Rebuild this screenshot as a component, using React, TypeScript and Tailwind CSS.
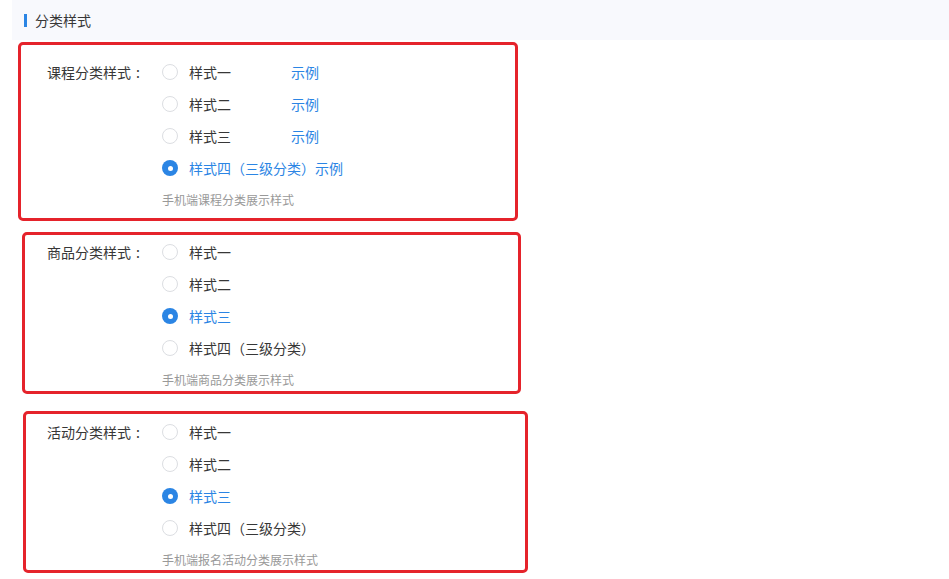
import React from "react";

type Group = {
  label: string;
  options: string[];
  checked: number;
  example?: boolean;
  hint: string;
  box: string;
};

const groups: Group[] = [
  {
    label: "课程分类样式",
    options: ["样式一", "样式二", "样式三", "样式四（三级分类）"],
    checked: 3,
    example: true,
    hint: "手机端课程分类展示样式",
    // red annotation frame around each block
    box: "mt-[2px] ml-[18px] w-[500px] h-[179px] pt-[11px] pl-[26px]",
  },
  {
    label: "商品分类样式",
    options: ["样式一", "样式二", "样式三", "样式四（三级分类）"],
    checked: 2,
    hint: "手机端商品分类展示样式",
    box: "mt-[11px] ml-[22px] w-[499px] h-[162px] pt-[1px] pl-[22px]",
  },
  {
    label: "活动分类样式",
    options: ["样式一", "样式二", "样式三", "样式四（三级分类）"],
    checked: 2,
    hint: "手机端报名活动分类展示样式",
    box: "mt-[17px] ml-[23px] w-[505px] h-[162px] pt-[2px] pl-[21px]",
  },
];

function Radio({ on }: { on: boolean }) {
  return on ? (
    <span className="flex h-[16px] w-[16px] items-center justify-center rounded-full bg-[#2b85e4]">
      <span className="h-[5px] w-[5px] rounded-full bg-white" />
    </span>
  ) : (
    <span className="h-[16px] w-[16px] rounded-full border border-[#dcdee2] bg-white" />
  );
}

function Block({ g }: { g: Group }) {
  return (
    <div className={`rounded-[5px] border-[3px] border-[#e5232b] ${g.box}`}>
      <div className="flex">
        <div className="w-[115px] shrink-0 h-[32px] leading-[32px] text-[14px] text-[#373737]">
          {g.label}
          <span className="inline-block w-[14px] text-center">:</span>
        </div>
        <div className="flex flex-col">
          {g.options.map((o, i) => (
            <div key={o} className="flex h-[32px] items-center">
              <Radio on={i === g.checked} />
              <span
                className={`ml-[11px] inline-block min-w-[102px] text-[14px] ${
                  i === g.checked ? "text-[#2b85e4]" : "text-[#373737]"
                }`}
              >
                {o}
              </span>
              {g.example && (
                <span className="text-[14px] text-[#2b85e4]">示例</span>
              )}
            </div>
          ))}
          <div className="mt-[6px] h-[20px] leading-[20px] text-[12px] text-[#999]">
            {g.hint}
          </div>
        </div>
      </div>
    </div>
  );
}

export default function App() {
  return (
    <div
      className="w-[949px] h-[579px] overflow-hidden bg-white"
      style={{ fontFamily: '"Noto Sans CJK SC", "Noto Sans", sans-serif' }}
    >
      <div className="ml-[12px] flex h-[40px] items-center bg-[#f8f9fd] pl-[12px]">
        <span className="h-[13px] w-[3px] bg-[#2b85e4]" />
        <span className="ml-[8px] text-[14px] text-[#373737]">分类样式</span>
      </div>
      {groups.map((g) => (
        <Block key={g.label} g={g} />
      ))}
    </div>
  );
}
